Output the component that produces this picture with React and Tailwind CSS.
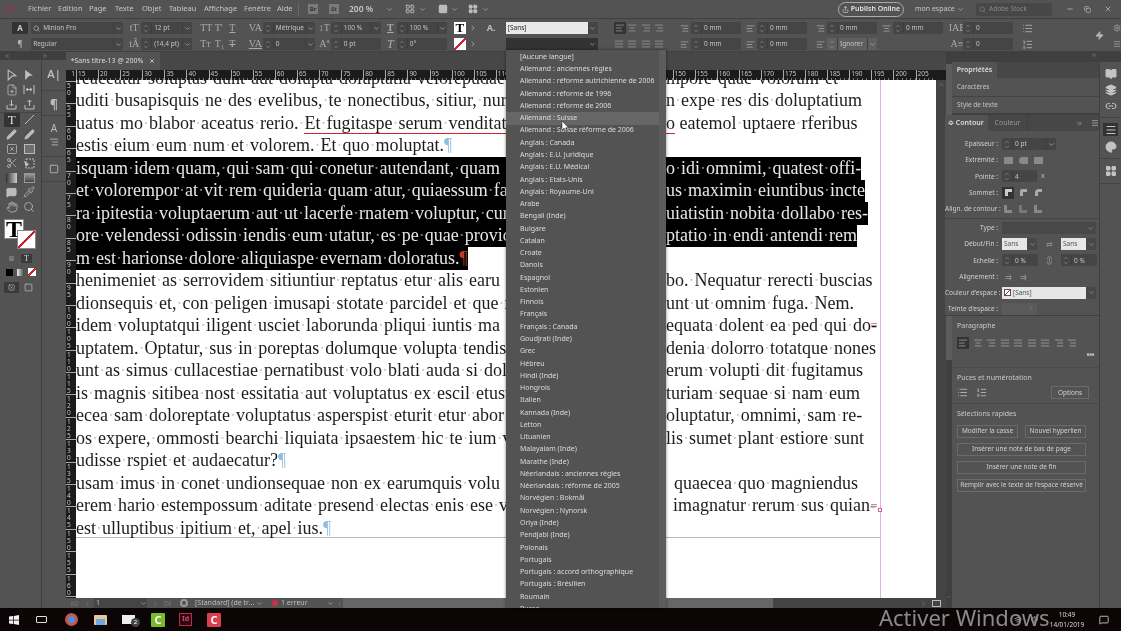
import React from "react";
import {
  AlignCenter, AlignJustify, AlignLeft, AlignRight, ChevronDown, ChevronLeft, ChevronRight, ChevronUp,
  ChevronsLeft, ChevronsRight, FilePlus, Hand, Layers, LayoutGrid, Link2, List, ListOrdered, Menu, MessageSquare,
  Palette, Pen, Pencil, Pipette, Scissors, Search, Settings, Share, SkipBack, SkipForward, Square, SquareX,
  Volume1, Wifi, Zap, BookOpen, Minus, X, Copy,
} from "lucide-react";

const languages = [
  "[Aucune langue]", "Allemand : anciennes règles", "Allemand : réforme autrichienne de 2006", "Allemand : réforme de 1996",
  "Allemand : réforme de 2006", "Allemand : Suisse", "Allemand : Suisse réforme de 2006", "Anglais : Canada",
  "Anglais : E.U. Juridique", "Anglais : E.U. Médical", "Anglais : Etats-Unis", "Anglais : Royaume-Uni", "Arabe",
  "Bengali (Inde)", "Bulgare", "Catalan", "Croate", "Danois", "Espagnol", "Estonien", "Finnois", "Français",
  "Français : Canada", "Goudjrati (Inde)", "Grec", "Hébreu", "Hindi (Inde)", "Hongrois", "Italien", "Kannada (Inde)",
  "Letton", "Lituanien", "Malayalam (Inde)", "Marathe (Inde)", "Néerlandais : anciennes règles",
  "Néerlandais : réforme de 2005", "Norvégien : Bokmål", "Norvégien : Nynorsk", "Oriya (Inde)", "Pendjabi (Inde)",
  "Polonais", "Portugais", "Portugais : accord orthographique", "Portugais : Brésilien", "Roumain", "Russe",
];

const lines = [
  { l: "reaceatur soluptas dunt aut dolupta doluptatia velorepudae", r: "mpore quae volorum et" },
  { l: "uditi busapisquis ne des evelibus, te nonectibus, sitiur, nur", r: "n expe res dis doluptatium" },
  { l: "uatus mo blabor aceatus rerio. ", u: "Et fugitaspe serum venditat", r: "eatemol uptaere rferibus", ru: "o" },
  { l: "estis eium eum num et volorem. Et quo moluptat.", end: true },
  { l: "isquam idem quam, qui sam qui conetur autendant, quam", r: "o idi omnimi, quatest offi-", sel: true },
  { l: "et volorempor at vit rem quideria quam atur, quiaessum fa", r: "us maximin eiuntibus incte", sel: true },
  { l: "ra ipitestia voluptaerum aut ut lacerfe rnatem voluptur, cur", r: "uiatistin nobita dollabo res-", sel: true },
  { l: "ore velendessi odissin iendis eum utatur, es pe quae provid", r: "ptatio in endi antendi rem", sel: true },
  { l: "m est harionse dolore aliquiaspe evernam doloratus.", end: true, sel: true },
  { l: "henimeniet as serrovidem sitiuntiur reptatus etur alis earu", r: "bo. Nequatur rerecti buscias" },
  { l: "dionsequis et, con peligen imusapi stotate parcidel et que n", r: "unt ut omnim fuga. Nem." },
  { l: "idem voluptatqui iligent usciet laborunda pliqui iuntis ma", r: "equata dolent ea ped qui do-" },
  { l: "uptatem. Optatur, sus in poreptas dolumque volupta tendis", r: "denia dolorro totatque nones" },
  { l: "unt as simus cullacestiae pernatibust volo blati auda si dol", r: "erum volupti dit fugitamus" },
  { l: "is magnis sitibea nost essitatia aut voluptatus ex escil etusti", r: "turiam sequae si nam eum" },
  { l: "ecea sam doloreptate voluptatus asperspist eturit etur abor", r: "oluptatur, omnimi, sam re-" },
  { l: "os expere, ommosti bearchi liquiata ipsaestem hic te ium v", r: "lis sumet plant estiore sunt" },
  { l: "udisse rspiet et audaecatur?", end: true },
  { l: "usam imus in conet undionsequae non ex earumquis volu", r: "quaecea quo magniendus", rc: "pl-[8px]" },
  { l: "erem hario estempossum aditate presend electas enis ese v", r: "imagnatur rerum sus quian-", rc: "pl-[7px]" },
  { l: "est ulluptibus ipitium et, apel ius.", end: true },
];

const menus = [
  ["Fichier", "w-[30px]"], ["Edition", "w-[31px]"], ["Page", "w-[26px]"], ["Texte", "w-[27px]"], ["Objet", "w-[27px]"],
  ["Tableau", "w-[35px]"], ["Affichage", "w-[40px]"], ["Fenêtre", "w-[33px]"], ["Aide", "w-[21px]"],
];

// spaces show as InDesign hidden characters
function Dotted({ text, sel }) {
  return text.split(" ").map((w, i) => (
    <React.Fragment key={i}>
      {i > 0 && <span className={sel ? "text-[#777]" : "text-[#b5d5ea]"}>·</span>}
      {w}
    </React.Fragment>
  ));
}

function DocLine({ l, u, r, ru, rc = "", end, sel }) {
  return (
    <div className={`flex h-[22.5px] w-fit items-center whitespace-nowrap ${sel ? "bg-black text-[#e8e8e8]" : "text-[#1c1c1c]"}`}>
      {end ? (
        <span><Dotted text={l} sel={sel} /><span className={sel ? "text-[#c0392b]" : "text-[#8fbfe0]"}>¶</span></span>
      ) : (
        <>
          <div className="w-[431px] overflow-hidden">
            <Dotted text={l} sel={sel} />
            {u && <span className="border-b border-[#d0202e] leading-[17px]"><Dotted text={u} /></span>}
          </div>
          <div className="w-[159px]" />
          <span className={rc}>
            {ru && <><span className="border-b border-[#d0202e] leading-[17px]">{ru}</span> </>}
            <Dotted text={r} sel={sel} />
          </span>
        </>
      )}
    </div>
  );
}

function Spin() {
  return (
    <div className="flex h-full w-[11px] shrink-0 flex-col items-center justify-center border-r border-[#3c3c3c] text-[#aaa]">
      <ChevronUp size={6} strokeWidth={2} className="-mb-[1px]" />
      <ChevronDown size={6} strokeWidth={2} />
    </div>
  );
}

function Field({ w, value, chevron, spin = true, light }) {
  return (
    <div style={{ width: w }} className={`flex h-[12px] shrink-0 items-center overflow-hidden rounded-[1px] text-[6.5px] text-[#c4c4c4] ${light ? "bg-[#5f5f5f]" : "bg-[#454545]"}`}>
      {spin && <Spin />}
      <span className="flex-1 truncate pl-[2px]">{value}</span>
      {chevron && (
        <div className="flex h-full w-[10px] items-center justify-center border-l border-[#3c3c3c]">
          <ChevronDown size={7} strokeWidth={2} />
        </div>
      )}
    </div>
  );
}

function IconField({ icon, w, value, chevron, light, iw = 13 }) {
  return (
    <div className="flex h-[12px] items-center">
      <div style={{ width: iw }} className="flex shrink-0 justify-center text-[#aaa]">{icon}</div>
      <Field w={w} value={value} chevron={chevron} light={light} />
    </div>
  );
}

const Glyph = ({ children, cls = "" }) => (
  <span className={`font-['Liberation_Serif',serif] text-[10px] leading-[12px] text-[#aaa] ${cls}`}>{children}</span>
);

function ControlBar() {
  const al = { size: 10, strokeWidth: 1.6, className: "text-[#a8a8a8]" };
  return (
    <div className="flex h-[34px] items-start border-y border-[#3f3f3f] bg-[#535353] pt-[3px]">
      <div className="ml-[12px] flex w-[17px] flex-col items-center gap-[4px]">
        <div className="flex h-[12px] w-full items-center justify-center rounded-[1px] bg-[#333] text-[8px] font-bold text-[#ccc]">A</div>
        <div className="h-[12px] text-[8px] leading-[12px] text-[#bbb]">¶</div>
      </div>
      <div className="ml-[3px] flex flex-col gap-[4px]">
        <div className="flex h-[12px] w-[92px] items-center rounded-[1px] bg-[#454545] pl-[2px] text-[6.5px] text-[#c4c4c4]">
          <Search size={7} /><span className="ml-[3px] flex-1">Minion Pro</span>
          <div className="flex h-full w-[10px] items-center justify-center border-l border-[#3c3c3c]"><ChevronDown size={7} /></div>
        </div>
        <Field w={92} value="Regular" chevron spin={false} />
      </div>
      <div className="ml-[4px] flex flex-col gap-[4px]">
        <IconField icon={<Glyph>tT</Glyph>} w={51} iw={14} value="12 pt" chevron />
        <IconField icon={<Glyph>tÂ</Glyph>} w={51} iw={14} value="(14,4 pt)" chevron />
      </div>
      <div className="ml-[8px] grid w-[46px] grid-cols-3">
        <Glyph>TT</Glyph><Glyph>T'</Glyph><Glyph cls="underline">T</Glyph>
        <Glyph cls="mt-[4px]">Tт</Glyph><Glyph cls="mt-[4px]">T₁</Glyph><Glyph cls="mt-[4px] line-through">T</Glyph>
      </div>
      <div className="ml-[4px] flex flex-col gap-[4px]">
        <IconField icon={<Glyph cls="text-[8px]">VA</Glyph>} w={52} iw={15} value="Métrique" chevron />
        <IconField icon={<Glyph cls="text-[8px] underline">VA</Glyph>} w={52} iw={15} value="0" chevron />
      </div>
      <div className="ml-[3px] flex flex-col gap-[4px]">
        <IconField icon={<Glyph>↕T</Glyph>} w={50} value="100 %" chevron />
        <IconField icon={<Glyph cls="text-[8px]">Aª</Glyph>} w={50} value="0 pt" />
      </div>
      <div className="ml-[3px] flex flex-col gap-[4px]">
        <IconField icon={<Glyph cls="font-bold underline">T</Glyph>} w={50} value="100 %" chevron />
        <IconField icon={<Glyph cls="text-[12px] italic">T</Glyph>} w={50} value="0°" />
      </div>
      <div className="ml-[7px] flex flex-col gap-[4px]">
        <div className="flex items-center gap-[3px]">
          <div className="flex h-[12px] w-[12px] items-center justify-center bg-white font-['Liberation_Serif',serif] text-[13px] font-bold text-black">T</div>
          <ChevronRight size={8} className="text-[#bbb]" />
        </div>
        <div className="flex items-center gap-[3px]">
          <div className="h-[12px] w-[12px] bg-[linear-gradient(135deg,#fff_44%,#d0202e_44%,#d0202e_56%,#fff_56%)]" />
          <ChevronRight size={8} className="text-[#bbb]" />
        </div>
      </div>
      <div className="ml-[10px] w-[8px] text-[9px] font-bold leading-[12px] text-[#bbb]">A.</div>
      <div className="ml-[11px] flex flex-col gap-[4px]">
        <div className="flex h-[12px] w-[92px] items-center">
          <div className="flex h-full w-[82px] items-center bg-[#e8e8e8] pl-[2px] text-[6.5px] text-[#222]">[Sans]</div>
          <div className="flex h-full flex-1 items-center justify-center bg-[#454545] text-[#bbb]"><ChevronDown size={7} /></div>
        </div>
        <div className="flex h-[12px] w-[92px] items-center justify-end bg-[#333] pr-[2px] text-[#bbb]"><ChevronDown size={7} /></div>
      </div>
      <div className="ml-[16px] grid w-[57px] grid-cols-4 gap-y-[4px]">
        <div className="flex h-[12px] w-[12px] items-center justify-center rounded-[1px] bg-[#333]"><AlignLeft {...al} /></div>
        <div className="flex h-[12px] items-center"><AlignCenter {...al} /></div>
        <div className="flex h-[12px] items-center"><AlignRight {...al} /></div>
        <div className="flex h-[12px] items-center"><AlignRight {...al} /></div>
        <div className="flex h-[12px] items-center"><AlignJustify {...al} /></div>
        <div className="flex h-[12px] items-center"><AlignJustify {...al} /></div>
        <div className="flex h-[12px] items-center"><AlignJustify {...al} /></div>
        <div className="flex h-[12px] items-center"><AlignJustify {...al} /></div>
      </div>
      <div className="ml-[10px] flex flex-col gap-[4px]">
        <IconField icon={<AlignRight size={9} />} w={50} value="0 mm" />
        <IconField icon={<AlignLeft size={9} />} w={50} value="0 mm" />
      </div>
      <div className="ml-[3px] flex flex-col gap-[4px]">
        <IconField icon={<AlignLeft size={9} />} w={50} value="0 mm" />
        <IconField icon={<AlignLeft size={9} />} w={50} value="0 mm" />
      </div>
      <div className="ml-[7px] flex flex-col gap-[4px]">
        <IconField icon={<AlignRight size={9} />} w={50} value="0 mm" />
        <IconField icon={<AlignLeft size={9} />} w={50} value="Ignorer" chevron light />
      </div>
      <div className="ml-[3px]">
        <IconField icon={<AlignCenter size={9} />} w={50} value="0 mm" iw={13} />
      </div>
      <div className="ml-[8px] flex flex-col gap-[4px]">
        <IconField icon={<Glyph cls="text-[6px]">IAE</Glyph>} w={50} value="0" iw={12} />
        <IconField icon={<Glyph cls="text-[7px]">A≡</Glyph>} w={50} value="0" iw={12} />
      </div>
      <div className="ml-[9px] flex flex-col gap-[4px] text-[#aaa]">
        <div className="flex h-[12px] items-center"><List size={11} /></div>
        <div className="flex h-[12px] items-center"><ListOrdered size={11} /></div>
      </div>
      <div className="ml-[62px] mt-[9px] text-[#bbb]"><Zap size={9} fill="#bbb" /></div>
      <div className="ml-[9px] flex flex-col gap-[4px] text-[#aaa]">
        <div className="flex h-[12px] items-center"><Settings size={8} /></div>
        <div className="flex h-[12px] items-center"><Menu size={8} /></div>
      </div>
    </div>
  );
}

function MenuBar() {
  return (
    <div className="flex h-[18px] items-center whitespace-nowrap bg-[#535353] text-[7.5px] text-[#c6c6c6]">
      <span className="ml-[5px] w-[9px] text-[9px] font-bold text-[#8a3a4a]">Id</span>
      <div className="ml-[14px] flex">
        {menus.map(([m, w]) => <span key={m} className={w}>{m}</span>)}
      </div>
      <div className="h-[12px] border-l border-[#6a6a6a]" />
      <div className="ml-[9px] flex h-[10px] w-[10px] items-center justify-center bg-[#7a7a7a] text-[6px] font-bold text-[#333]">Br</div>
      <div className="ml-[11px] flex h-[10px] w-[10px] items-center justify-center bg-[#7a7a7a] text-[6px] font-bold text-[#333]">St</div>
      <span className="ml-[10px] w-[32px] text-[8.5px] font-semibold">200 %</span>
      <ChevronDown size={7} className="ml-[5px]" />
      <LayoutGrid size={10} className="ml-[12px]" />
      <ChevronDown size={7} className="ml-[4px]" />
      <Square size={10} fill="#bbb" className="ml-[12px]" />
      <ChevronDown size={7} className="ml-[3px]" />
      <LayoutGrid size={10} fill="#bbb" className="ml-[10px]" />
      <ChevronDown size={7} className="ml-[4px]" />
      <div className="ml-auto flex items-center">
        <div className="flex h-[15px] w-[66px] items-center justify-center gap-[2px] rounded-full border border-[#aaa] text-[7px] font-semibold text-[#e4e4e4]">
          <Share size={7} /> Publish Online
        </div>
        <span className="ml-[11px] w-[38px] text-[7px]">mon espace</span>
        <ChevronDown size={7} className="ml-[4px]" />
        <div className="ml-[12px] flex h-[13px] w-[76px] items-center gap-[3px] rounded-[1px] bg-[#474747] pl-[3px] text-[6.5px] text-[#8a8a8a]">
          <Search size={7} /> Adobe Stock
        </div>
        <Minus size={8} className="ml-[14px]" />
        <Copy size={7} className="ml-[10px]" />
        <X size={8} className="ml-[13px] mr-[9px]" />
      </div>
    </div>
  );
}

function ToolCell({ children, active }) {
  return (
    <div className={`flex h-[14.5px] items-center justify-center ${active ? "rounded-[1px] bg-[#333]" : ""}`}>{children}</div>
  );
}

function Tools() {
  const s = { size: 12, strokeWidth: 1.5 };
  return (
    <div className="flex w-[66px] shrink-0 flex-col bg-[#535353] text-[#bdbdbd]">
      <div className="flex h-[8px] items-center justify-between bg-[#3f3f3f] pl-[4px] pr-[18px] text-[#999]">
        <ChevronsLeft size={6} /><ChevronsRight size={6} />
      </div>
      <div className="flex flex-1">
        <div className="w-[42px] border-r border-[#3f3f3f] px-[4px] pt-[8px]">
          <div className="grid grid-cols-2 gap-x-[2px]">
            <ToolCell><svg width="12" height="12" viewBox="0 0 11 11"><path d="M2 1 L9 6 L5.5 6.5 L2 10Z" fill="none" stroke="#c0c0c0" /></svg></ToolCell>
            <ToolCell><svg width="12" height="12" viewBox="0 0 11 11"><path d="M2 1 L9 6 L5.5 6.5 L2 10Z" fill="#c0c0c0" /></svg></ToolCell>
            <ToolCell><FilePlus {...s} /></ToolCell>
            <ToolCell><svg width="12" height="11" viewBox="0 0 12 11" stroke="#c0c0c0" fill="none"><path d="M1 1V10M11 1V10M3 5.5H9M3 5.5L5 4M3 5.5L5 7M9 5.5L7 4M9 5.5L7 7" /></svg></ToolCell>
            <ToolCell><svg width="11" height="11" viewBox="0 0 11 11" stroke="#c0c0c0" fill="none"><path d="M1 6V10H10V6M5.5 1V7M3.5 5L5.5 7L7.5 5" /></svg></ToolCell>
            <ToolCell><svg width="11" height="11" viewBox="0 0 11 11" stroke="#c0c0c0" fill="none"><path d="M1 6V10H10V6M5.5 7V1M3.5 3L5.5 1L7.5 3" /></svg></ToolCell>
          </div>
          <div className="-mx-[4px] border-t border-[#454545]" />
          <div className="grid grid-cols-2 gap-x-[2px]">
            <ToolCell active><span className="font-['Liberation_Serif',serif] text-[13px] leading-none text-[#ddd]">T</span></ToolCell>
            <ToolCell><svg width="11" height="11" viewBox="0 0 11 11"><path d="M1 10L10 1" stroke="#c0c0c0" /></svg></ToolCell>
            <ToolCell><Pen size={11} fill="#bdbdbd" /></ToolCell>
            <ToolCell><Pencil size={11} fill="#bdbdbd" /></ToolCell>
            <ToolCell><SquareX {...s} /></ToolCell>
            <ToolCell><div className="h-[10px] w-[11px] border border-[#bbb] bg-[#6f6f6f]" /></ToolCell>
            <ToolCell><Scissors {...s} /></ToolCell>
            <ToolCell><svg width="12" height="11" viewBox="0 0 12 11" stroke="#c0c0c0" fill="none" strokeDasharray="2 1"><path d="M3 1H11V10H3Z" /><path d="M1 3L6 6L3 9Z" fill="#c0c0c0" stroke="none" /></svg></ToolCell>
            <ToolCell><div className="h-[10px] w-[11px] bg-[linear-gradient(90deg,#333,#ccc)]" /></ToolCell>
            <ToolCell><div className="h-[10px] w-[11px] border border-[#999] bg-[linear-gradient(180deg,#999,#444)]" /></ToolCell>
            <ToolCell><MessageSquare size={11} fill="#bdbdbd" /></ToolCell>
            <ToolCell><Pipette {...s} /></ToolCell>
            <ToolCell><Hand {...s} /></ToolCell>
            <ToolCell><Search {...s} /></ToolCell>
          </div>
          <div className="relative mt-[5px] h-[30px]">
            <div className="flex h-[20px] w-[20px] items-center justify-center border border-[#888] bg-white font-['Liberation_Serif',serif] text-[24px] font-bold leading-none text-black">T</div>
            <div className="absolute left-[13px] top-[11px] h-[19px] w-[19px] border border-[#888] bg-[linear-gradient(135deg,#fff_46%,#d0202e_46%,#d0202e_54%,#fff_54%)]" />
          </div>
          <div className="mt-[5px] flex items-center justify-center gap-[7px]">
            <div className="h-[5px] w-[5px] bg-[#777]" />
            <div className="flex h-[9px] w-[11px] items-center justify-center rounded-[1px] bg-[#3a3a3a] font-['Liberation_Serif',serif] text-[8px] text-[#ddd]">T</div>
          </div>
          <div className="mt-[5px] flex items-center gap-[4px] pl-[2px]">
            <div className="h-[7px] w-[7px] bg-black" />
            <div className="h-[7px] w-[7px] bg-[linear-gradient(90deg,#eee,#444)]" />
            <div className="h-[8px] w-[8px] bg-[linear-gradient(135deg,#fff_42%,#d0202e_42%,#d0202e_58%,#fff_58%)]" />
          </div>
          <div className="mt-[6px] flex items-center gap-[5px]">
            <div className="flex h-[11px] w-[15px] items-center justify-center rounded-[1px] bg-[#3a3a3a]"><SquareX size={7} /></div>
            <Square size={9} />
          </div>
        </div>
        <div className="flex w-[24px] flex-col items-center pt-[6px] text-[#bdbdbd]">
          <span className="h-[24px] text-[11px] font-semibold leading-[16px]">A|</span>
          <div className="w-full border-t border-[#454545] pt-[6px]"><span className="block h-[18px] text-center text-[12px] font-bold leading-[16px]">¶</span></div>
          <div className="w-full border-t border-[#454545] pt-[6px] text-center">
            <span className="block h-[12px] text-[10px] leading-[12px]">A</span>
            <AlignRight size={10} className="mx-auto mt-[3px]" />
          </div>
          <div className="mt-[9px] w-full border-y border-[#454545] py-[7px]"><Square size={10} className="mx-auto" /></div>
        </div>
      </div>
    </div>
  );
}

function TopRuler() {
  const cells = [];
  for (let n = 15; n <= 210; n += 5) cells.push(n);
  return (
    <div className="flex h-[10px] shrink-0 overflow-hidden bg-[#1b1b1b] text-[6.5px] leading-[8px] text-[#c8c8c8]">
      <div className="flex w-[10px] shrink-0 justify-end pr-[1px]">1</div>
      <div className="flex w-[860px] shrink-0 overflow-hidden bg-[repeating-linear-gradient(90deg,transparent_0,transparent_3.42px,#777_3.42px,#777_4.42px)] bg-[length:100%_2px] bg-bottom bg-no-repeat">
        {cells.map((n) => (
          <div key={n} className="h-full w-[22.1px] shrink-0 border-l border-[#aaa] pl-[1px]">{n}</div>
        ))}
      </div>
    </div>
  );
}

function SideRuler() {
  const cells = [];
  for (let n = 50; n <= 165; n += 5) cells.push(n);
  return (
    <div className="w-[10px] shrink-0 overflow-hidden bg-[#1b1b1b] pt-[1px] text-[6.5px] leading-[7px] text-[#c8c8c8]">
      {cells.map((n) => (
        <div key={n} className="h-[22.4px] border-t border-[#aaa] pl-[1px]">
          {String(n).split("").map((d, i) => <div key={i}>{d}</div>)}
        </div>
      ))}
    </div>
  );
}

function Page() {
  return (
    <div className="relative w-[860px] shrink-0 overflow-hidden bg-white">
      <div className="flow-root h-full w-[805px] border-r border-[#e0b0e8] font-['Liberation_Serif',serif] text-[18px]">
        <div className="-mt-[13px]">
          {lines.map((ln, i) => <DocLine key={i} {...ln} />)}
        </div>
        <div className="-mt-[3px] border-t border-[#b8b8b8]" />
      </div>
      <div className="absolute left-[795px] top-[243px] h-[3px] w-[6px] border-y border-[#d08a8a]" />
      <div className="absolute left-[802px] top-[428px] h-[4px] w-[4px] border border-[#d060a0] bg-white" />
      <div className="absolute left-[795px] top-[424px] h-[3px] w-[6px] border-y border-[#d08a8a]" />
    </div>
  );
}

function StatusBar() {
  return (
    <div className="flex h-[10px] shrink-0 items-center bg-[#535353] text-[7px] text-[#bbb]">
      <SkipBack size={7} className="ml-[5px] text-[#888]" />
      <ChevronLeft size={7} className="ml-[6px] text-[#888]" />
      <div className="ml-[3px] flex h-full w-[53px] items-center justify-between bg-[#454545] pl-[2px]">1<ChevronDown size={7} /></div>
      <ChevronRight size={7} className="ml-[5px] text-[#888]" />
      <SkipForward size={7} className="ml-[5px] text-[#888]" />
      <div className="ml-[9px] h-[8px] w-[8px] rounded-full border-2 border-[#999]" />
      <span className="ml-[7px] w-[61px] truncate">[Standard] (de tra...</span>
      <ChevronDown size={7} />
      <div className="ml-[9px] h-[6px] w-[6px] rounded-full bg-[#d0303e]" />
      <span className="ml-[3px] w-[46px]">1 erreur</span>
      <ChevronDown size={7} />
      <ChevronLeft size={7} className="ml-[2px] text-[#888]" />
      <div className="flex h-full flex-1 items-center bg-[#444]">
        <div className="h-full w-[430px] bg-[#666]" />
        <ChevronRight size={7} className="ml-[147px] text-[#888]" />
        <div className="ml-[5px] h-[7px] w-[9px] border border-[#bbb]" />
      </div>
    </div>
  );
}

function Row({ label, children }) {
  return (
    <div className="flex h-[16.2px] items-center">
      <div className="w-[53px] shrink-0 whitespace-nowrap text-right text-[6.5px] text-[#cfcfcf]">{label}</div>
      <div className="ml-[4px] flex items-center">{children}</div>
    </div>
  );
}

const Sw = ({ dark, children }) => (
  <div className={`mr-[3px] flex h-[12px] w-[12px] items-center justify-center text-[#999] ${dark ? "bg-[#333]" : ""}`}>{children}</div>
);

function WhiteSelect({ w, children }) {
  return (
    <div className="flex h-[12px] items-center">
      <div style={{ width: w }} className="flex h-full items-center gap-[2px] bg-[#e6e6e6] pl-[2px] text-[6.5px] text-[#555]">{children}</div>
      <div className="flex h-full w-[10px] items-center justify-center bg-[#484848] text-[#aaa]"><ChevronDown size={7} /></div>
    </div>
  );
}

function ContourPanel() {
  return (
    <div className="relative z-10 -ml-[7px] h-[201px] border-b border-[#3f3f3f] bg-[#535353]">
      <div className="flex h-[16px] items-center whitespace-nowrap bg-[#474747] text-[7px]">
        <div className="flex h-full w-[43px] items-center bg-[#535353] pl-[3px] font-semibold text-[#ddd]">≎ Contour</div>
        <div className="flex h-full w-[40px] items-center justify-center border-r border-[#3f3f3f] text-[#999]">Couleur</div>
        <ChevronsRight size={7} className="ml-[48px] text-[#bbb]" />
        <Menu size={8} className="ml-[8px] text-[#bbb]" />
      </div>
      <div className="pt-[5px]">
        <Row label="Epaisseur :"><Field w={54} value="0 pt" chevron /></Row>
        <Row label="Extrémité :"><Sw><div className="h-[7px] w-[9px] bg-[#8a8a8a]" /></Sw><Sw><div className="h-[7px] w-[9px] rounded-l-full bg-[#8a8a8a]" /></Sw><Sw><div className="h-[7px] w-[9px] bg-[#8a8a8a]" /></Sw></Row>
        <Row label="Pointe :"><Field w={35} value="4" /><span className="ml-[4px] text-[7px] text-[#bbb]">x</span></Row>
        <Row label="Sommet :"><Sw dark><div className="h-[7px] w-[7px] border-l-[3px] border-t-[3px] border-[#ccc]" /></Sw><Sw><div className="h-[7px] w-[7px] rounded-tl-[3px] border-l-[3px] border-t-[3px] border-[#aaa]" /></Sw><Sw><div className="h-[7px] w-[7px] rounded-tl-[4px] border-l-[3px] border-t-[3px] border-[#aaa]" /></Sw></Row>
        <Row label="Align. de contour :"><Sw><div className="h-[8px] w-[8px] border-b-[3px] border-l-[3px] border-[#888]" /></Sw><Sw><div className="h-[8px] w-[8px] border-b-[3px] border-l-[3px] border-[#777]" /></Sw><Sw><div className="h-[8px] w-[8px] border-b-[3px] border-l-[3px] border-[#888]" /></Sw></Row>
        <div className="my-[1px] border-t border-[#444]" />
        <Row label="Type :"><div className="flex h-[12px] w-[94px] items-center justify-end bg-[#484848] pr-[2px] text-[#aaa]"><ChevronDown size={7} /></div></Row>
        <Row label="Début/Fin :">
          <WhiteSelect w={25}>Sans</WhiteSelect>
          <div className="w-[24px] text-center text-[8px] text-[#888]">⇄</div>
          <WhiteSelect w={25}>Sans</WhiteSelect>
        </Row>
        <Row label="Echelle :">
          <Field w={36} value="0 %" />
          <Link2 size={9} className="mx-[7px] rotate-90 text-[#999]" />
          <Field w={36} value="0 %" />
        </Row>
        <Row label="Alignement :"><Sw><span className="text-[8px]">⇉</span></Sw><Sw><span className="text-[8px]">⇉</span></Sw></Row>
        <Row label="Couleur d'espace :">
          <WhiteSelect w={84}>
            <div className="h-[7px] w-[7px] border border-[#555] bg-[linear-gradient(135deg,#fff_42%,#d0202e_42%,#d0202e_58%,#fff_58%)]" />
            [Sans]
          </WhiteSelect>
        </Row>
        <Row label="Teinte d'espace :"><div className="flex h-[12px] w-[35px] items-center justify-end bg-[#5a5a5a] pr-[2px] text-[#888]"><ChevronRight size={7} /></div></Row>
      </div>
    </div>
  );
}

function Btn({ children, w }) {
  return (
    <div className={`flex h-[13px] items-center justify-center border border-[#6a6a6a] text-[6.5px] text-[#d0d0d0] ${w}`}>{children}</div>
  );
}

function RightPanel() {
  const al = { size: 10, strokeWidth: 1.6, className: "text-[#b5b5b5]" };
  return (
    <div className="flex w-[175px] shrink-0 bg-[#535353]">
      <div className="flex w-[6px] shrink-0 flex-col justify-between bg-[#3f3f3f] pb-[8px] pt-[12px] text-[#777]">
        <div className="h-[296px] bg-[#5c5c5c]" />
        <ChevronDown size={6} />
      </div>
      <div className="flex w-[148px] shrink-0 flex-col border-r border-[#3f3f3f]">
        <div className="flex h-[10px] justify-end bg-[#3f3f3f] pr-[2px] text-[#999]"><ChevronsRight size={6} /></div>
        <div className="flex h-[16px] bg-[#474747]">
          <div className="flex w-[45px] items-center justify-center bg-[#535353] text-[7px] font-semibold text-[#ddd]">Propriétés</div>
        </div>
        <div className="flex h-[19px] items-center border-b border-[#444] pl-[5px] text-[6.5px] text-[#c4c4c4]">Caractères</div>
        <div className="flex h-[18px] items-center border-b-2 border-[#3f3f3f] pl-[5px] text-[6.5px] text-[#c4c4c4]">Style de texte</div>
        <ContourPanel />
        <div className="border-b border-[#4a4a4a] px-[5px] pb-[8px] pt-[5px]">
          <div className="text-[7px] text-[#c8c8c8]">Paragraphe</div>
          <div className="mt-[5px] flex items-center gap-[3.5px]">
            <div className="flex h-[12px] w-[12px] items-center justify-center rounded-[1px] bg-[#333]"><AlignLeft {...al} /></div>
            <AlignCenter {...al} /><AlignRight {...al} /><AlignJustify {...al} /><AlignJustify {...al} /><AlignJustify {...al} /><AlignJustify {...al} /><AlignRight {...al} /><AlignRight {...al} />
          </div>
          <div className="mt-[2px] text-right text-[8px] font-bold leading-[8px] tracking-[-0.5px] text-[#bbb]">•••</div>
        </div>
        <div className="border-b border-[#4a4a4a] px-[5px] pb-[4px] pt-[5px]">
          <div className="text-[7px] text-[#c8c8c8]">Puces et numérotation</div>
          <div className="mt-[3px] flex items-center text-[#b5b5b5]">
            <List size={11} />
            <ListOrdered size={11} className="ml-[8px]" />
            <div className="ml-auto mr-[5px]"><Btn w="w-[38px]">Options</Btn></div>
          </div>
        </div>
        <div className="px-[5px] pt-[5px]">
          <div className="text-[7px] text-[#c8c8c8]">Sélections rapides</div>
          <div className="mt-[5px] flex w-[129px] flex-col gap-[5px]">
            <div className="flex justify-between"><Btn w="w-[61px]">Modifier la casse</Btn><Btn w="w-[61px]">Nouvel hyperlien</Btn></div>
            <Btn>Insérer une note de bas de page</Btn>
            <Btn>Insérer une note de fin</Btn>
            <Btn>Remplir avec le texte de l'espace réservé</Btn>
          </div>
        </div>
      </div>
      <div className="flex flex-1 flex-col items-center text-[#c4c4c4]">
        <div className="h-[10px] w-full bg-[#3f3f3f]" />
        <div className="flex w-full flex-col items-center gap-[4px] border-b border-[#444] pb-[5px] pt-[6px]">
          <BookOpen size={12} fill="#c4c4c4" />
          <Layers size={12} fill="#c4c4c4" />
          <Link2 size={12} />
        </div>
        <div className="flex w-full flex-col items-center gap-[5px] border-b border-[#444] py-[5px]">
          <div className="flex h-[13px] w-[15px] items-center justify-center bg-[#333]"><Menu size={12} /></div>
          <Palette size={12} fill="#c4c4c4" />
        </div>
        <div className="flex w-full justify-center border-b border-[#444] py-[6px]">
          <LayoutGrid size={12} fill="#c4c4c4" />
        </div>
      </div>
    </div>
  );
}

function Taskbar() {
  return (
    <div className="flex h-[23px] shrink-0 items-center bg-[#0b0506] text-white">
      <svg className="ml-[9px]" width="10" height="10" viewBox="0 0 10 10" fill="#f2f2f2"><path d="M0 1.5L4.3 1V4.7H0ZM5 .9L10 0V4.7H5ZM0 5.4H4.3V9L0 8.5ZM5 5.4H10V10L5 9.1Z" /></svg>
      <div className="ml-[17px] h-[7px] w-[11px] rounded-[1px] border border-[#ddd]" />
      <div className="ml-[18px] h-[13px] w-[13px] rounded-full border-[3px] border-[#c9554a] bg-[#4a90e2]" />
      <div className="ml-[16px] h-[10px] w-[13px] rounded-[1px] bg-[#e8c89a]"><div className="mx-auto mt-[4px] h-[6px] w-[9px] bg-[#6fa8dc]" /></div>
      <div className="relative ml-[15px]">
        <div className="h-[9px] w-[13px] bg-[#eee]" />
        <div className="absolute -bottom-[3px] -right-[5px] flex h-[9px] w-[9px] items-center justify-center rounded-full bg-[#444] text-[6px]">2</div>
      </div>
      <div className="ml-[16px] flex h-[14px] w-[14px] items-center justify-center rounded-[1px] bg-[#7ab92d] text-[11px] font-bold leading-none">C</div>
      <div className="ml-[14px] flex h-[13px] w-[13px] items-center justify-center border border-[#c02a45] bg-[#2a0a12] text-[7px] font-bold text-[#e0405a]">Id</div>
      <div className="ml-[15px] flex h-[14px] w-[14px] items-center justify-center rounded-[1px] bg-[#d9404e] text-[11px] font-bold leading-none">C</div>
      <div className="ml-auto flex items-center text-[#d8d8d8]">
        <Wifi size={8} />
        <Volume1 size={9} className="ml-[9px]" />
        <div className="ml-[9px] w-[36px] text-center text-[6.5px] leading-[10px]">10:49<br />14/01/2019</div>
        <MessageSquare size={10} className="ml-[14px] mr-[12px]" />
      </div>
    </div>
  );
}

export default function App() {
  return (
    <div className="relative flex h-[631px] w-[1121px] flex-col overflow-hidden bg-[#535353] font-['Noto_Sans','Open_Sans',sans-serif] blur-[0.3px]">
      <MenuBar />
      <ControlBar />
      <div className="flex h-[556px] shrink-0">
        <Tools />
        <div className="flex w-[880px] shrink-0 flex-col">
          <div className="flex h-[18px] shrink-0 bg-[#474747]">
            <div className="flex w-[94px] items-center justify-center gap-[6px] bg-[#535353] text-[7px] text-[#ddd]">
              *Sans titre-13 @ 200% <X size={6} strokeWidth={3} />
            </div>
          </div>
          <TopRuler />
          <div className="flex min-h-0 flex-1">
            <SideRuler />
            <Page />
            <div className="flex w-[10px] shrink-0 justify-center bg-[#444] pt-[1px] text-[#888]"><ChevronUp size={7} /></div>
          </div>
          <StatusBar />
        </div>
        <RightPanel />
      </div>
      <Taskbar />

      {/* langue dropdown */}
      <div className="absolute left-[506px] top-[50px] flex h-[558px] w-[160px] overflow-hidden bg-[#535353] shadow-[0_0_3px_rgba(0,0,0,0.5)]">
        <div className="flex-1 overflow-hidden pt-[1px]">
          {languages.map((lang, i) => (
            <div key={lang} className={`flex h-[12.28px] items-center whitespace-nowrap pl-[14px] text-[7px] text-[#dcdcdc] ${i === 5 ? "bg-[#666]" : ""}`}>{lang}</div>
          ))}
        </div>
        <div className="flex w-[7px] justify-center bg-[#5c5c5c] text-[#888]"><ChevronUp size={6} /></div>
      </div>
      <svg className="absolute left-[561px] top-[121px]" width="8" height="11" viewBox="0 0 8 11"><path d="M1 0V9L3 7L5 10.5L6 10L4.5 6.8H7.5Z" fill="#fff" stroke="#222" strokeWidth=".5" /></svg>

      <div className="absolute left-[879px] top-[604px] text-[22px] leading-[26px] text-[#8a8a8a]">Activer Windows</div>
    </div>
  );
}
